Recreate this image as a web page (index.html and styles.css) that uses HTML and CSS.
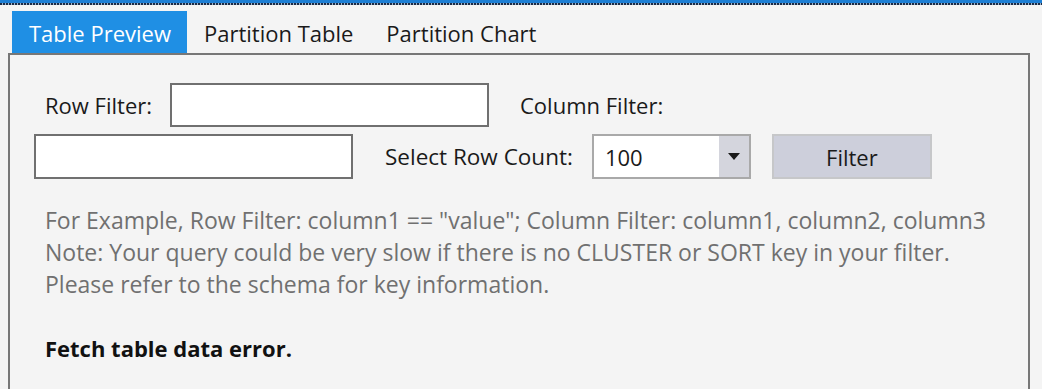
FILE: index.html
```html
<!DOCTYPE html>
<html>
<head>
<meta charset="utf-8">
<link rel="stylesheet" href="styles.css">
</head>
<body>
<div class="topbar"></div>
<div class="dots"></div>
<div class="tabs">
  <div class="tab active">Table Preview</div>
  <div class="tab">Partition Table</div>
  <div class="tab">Partition Chart</div>
</div>
<div class="panel">
  <div class="row row1">
    <span class="label lbl-row">Row Filter:</span>
    <div class="input"></div>
    <span class="label lbl-col">Column Filter:</span>
  </div>
  <div class="row row2">
    <div class="input"></div>
    <span class="label lbl-count">Select Row Count:</span>
    <div class="select">
      <span class="select-value">100</span>
      <span class="select-arrow"><svg width="12" height="7" viewBox="0 0 12 7"><path d="M0 0 L12 0 L6 7 Z" fill="#1a1a1a"/></svg></span>
    </div>
    <div class="button">Filter</div>
  </div>
  <div class="help">
    <div>For Example, Row Filter: column1 == "value"; Column Filter: column1, column2, column3</div>
    <div>Note: Your query could be very slow if there is no CLUSTER or SORT key in your filter.</div>
    <div>Please refer to the schema for key information.</div>
  </div>
  <div class="error">Fetch table data error.</div>
</div>
</body>
</html>
```
FILE: styles.css
```css
html, body {
  margin: 0;
  padding: 0;
  background: #f4f4f4;
  font-family: "Open Sans", "Noto Sans", sans-serif;
  font-size: 22px;
  color: #1a1a1a;
  overflow: hidden;
}
.topbar {
  height: 3px;
  background: #1c7ed4;
}
.dots {
  height: 2px;
  background: repeating-linear-gradient(90deg, #1b2a44 0 2px, #9fb3c9 2px 3px);
}
.tabs {
  display: flex;
  margin: 6px 0 0 12px;
  height: 42px;
}
.tab {
  display: flex;
  align-items: center;
  padding: 2px 16px 0 17px;
  color: #1a1a1a;
}
.tab.active {
  background: #1f8fe4;
  color: #ffffff;
}
.panel {
  margin-left: 8px;
  width: 1018px;
  height: 400px;
  border: 2px solid #777777;
  border-bottom: none;
}
.row {
  display: flex;
  align-items: center;
}
.row1 {
  margin-top: 28px;
  height: 44px;
}
.row2 {
  margin-top: 7px;
  height: 45px;
}
.input {
  box-sizing: border-box;
  height: 100%;
  width: 319px;
  background: #ffffff;
  border: 2px solid #707070;
}
.lbl-row {
  margin-left: 35px;
  margin-right: 18px;
}
.lbl-col {
  margin-left: 31px;
}
.row2 .input {
  margin-left: 24px;
}
.lbl-count {
  margin-left: 32px;
  margin-right: 19px;
  font-size: 22.5px;
}
.select {
  box-sizing: border-box;
  display: flex;
  height: 100%;
  width: 159px;
  background: #ffffff;
  border: 2px solid #a9a9a9;
}
.select-value {
  flex: 1;
  display: flex;
  align-items: center;
  padding-left: 11px;
}
.select-arrow {
  width: 30px;
  background: #d4d5dd;
  display: flex;
  align-items: center;
  justify-content: center;
}
.button {
  box-sizing: border-box;
  margin-left: 21px;
  width: 160px;
  height: 100%;
  background: #cdcfdb;
  border: 2px solid #c6c7c9;
  display: flex;
  align-items: center;
  justify-content: center;
}
.help {
  margin-top: 25px;
  padding-left: 35px;
  color: #707070;
  font-size: 23px;
  line-height: 32px;
}
.error {
  margin-top: 32px;
  padding-left: 35px;
  font-weight: 700;
  color: #111111;
  line-height: 32px;
}
```
